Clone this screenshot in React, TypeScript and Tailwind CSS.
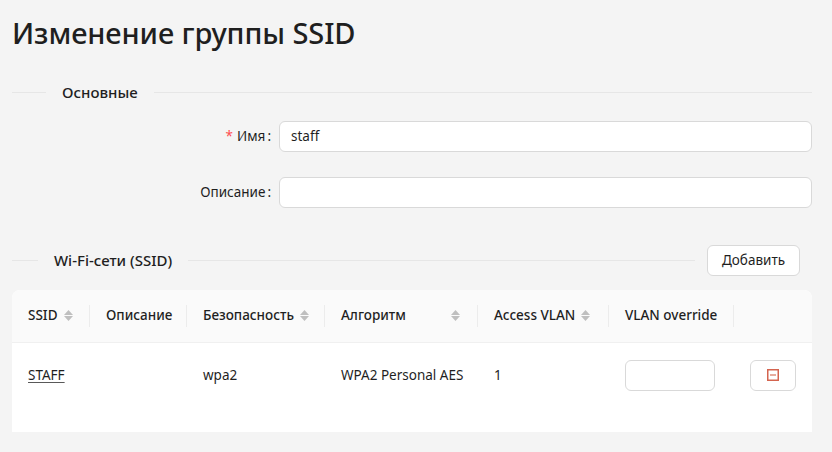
import React from "react";

function SortIcon() {
  return (
    <span className="ml-[6px] inline-flex flex-col items-center justify-center gap-[1px] text-[#bfbfbf]">
      <svg width="9" height="5" viewBox="0 0 9 5"><path d="M4.5 0L9 5H0z" fill="currentColor" /></svg>
      <svg width="9" height="5" viewBox="0 0 9 5"><path d="M0 0h9L4.5 5z" fill="currentColor" /></svg>
    </span>
  );
}

function Sep() {
  return <span className="absolute right-0 h-[22px] w-px bg-[#ececec]" />;
}

export default function App() {
  const font = { fontFamily: '"Noto Sans", "Open Sans", sans-serif' };
  return (
    <div className="h-[452px] w-[832px] overflow-hidden bg-[#f4f4f4] pl-3 pr-5 text-[#1f1f1f]" style={font}>
      <h1 className="pt-[14px] text-[29px] font-medium leading-[38px] tracking-[-0.1px]">Изменение группы SSID</h1>

      <div className="mt-[29px] flex items-center">
        <div className="h-px w-[34px] bg-[#e6e6e6]" />
        <div className="px-4 text-[15px] font-medium">Основные</div>
        <div className="h-px flex-1 bg-[#e6e6e6]" />
      </div>

      <div className="mt-[17px] flex flex-col gap-[25px] text-[13.5px]">
        <div className="flex items-center">
          <label className="w-[267px] pr-2 text-right">
            <span className="mr-1 text-[#ff4d4f]">*</span>Имя<span className="ml-[2px]">:</span>
          </label>
          <div className="flex h-[31px] flex-1 items-center rounded-md border border-[#d9d9d9] bg-white px-[11px]">staff</div>
        </div>
        <div className="flex items-center">
          <label className="w-[267px] pr-2 text-right">
            Описание<span className="ml-[2px]">:</span>
          </label>
          <div className="h-[31px] flex-1 rounded-md border border-[#d9d9d9] bg-white" />
        </div>
      </div>

      <div className="mt-[37px] flex items-center">
        <div className="h-px w-[26px] bg-[#e6e6e6]" />
        <div className="px-4 text-[15px] font-medium">Wi-Fi-сети (SSID)</div>
        <div className="h-px flex-1 bg-[#e6e6e6]" />
        <button className="ml-3 mr-[12px] h-[31px] w-[93px] rounded-md border border-[#d9d9d9] bg-white text-[13.5px]">Добавить</button>
      </div>

      <div className="mt-[14px] overflow-hidden rounded-t-lg bg-white">
        <div className="flex h-[53px] items-center border-b border-[#f0f0f0] bg-[#fafafa] text-[13.5px] font-medium">
          <div className="relative flex w-[78px] items-center pl-4">SSID<SortIcon /><Sep /></div>
          <div className="relative flex w-[97px] items-center pl-4">Описание<Sep /></div>
          <div className="relative flex w-[138px] items-center pl-4">Безопасность<SortIcon /><Sep /></div>
          <div className="relative flex w-[153px] items-center justify-between pl-4 pr-[18px]">Алгоритм<SortIcon /><Sep /></div>
          <div className="relative flex w-[131px] items-center pl-4">Access VLAN<SortIcon /><Sep /></div>
          <div className="relative flex w-[125px] items-center pl-4">VLAN override<Sep /></div>
          <div className="flex-1" />
        </div>
        <div className="flex h-[89px] items-start pt-[17px] text-[13.5px]">
          <div className="flex h-[31px] w-[78px] items-center pl-4"><span className="underline decoration-[#595959] underline-offset-2">STAFF</span></div>
          <div className="w-[97px]" />
          <div className="flex h-[31px] w-[138px] items-center pl-4">wpa2</div>
          <div className="flex h-[31px] w-[153px] items-center pl-4">WPA2 Personal AES</div>
          <div className="flex h-[31px] w-[131px] items-center pl-4">1</div>
          <div className="w-[125px] pl-4"><div className="h-[31px] w-[90px] rounded-md border border-[#d9d9d9] bg-white" /></div>
          <div className="flex flex-1 justify-center">
            <button className="flex h-[31px] w-[46px] items-center justify-center rounded-md border border-[#d9d9d9] bg-white">
              <svg width="12" height="12" viewBox="0 0 12 12">
                <rect x="0.75" y="0.75" width="10.5" height="10.5" fill="none" stroke="#d4644f" strokeWidth="1.5" />
                <rect x="3" y="5.25" width="6" height="1.5" fill="#e0917f" />
              </svg>
            </button>
          </div>
        </div>
      </div>
    </div>
  );
}
